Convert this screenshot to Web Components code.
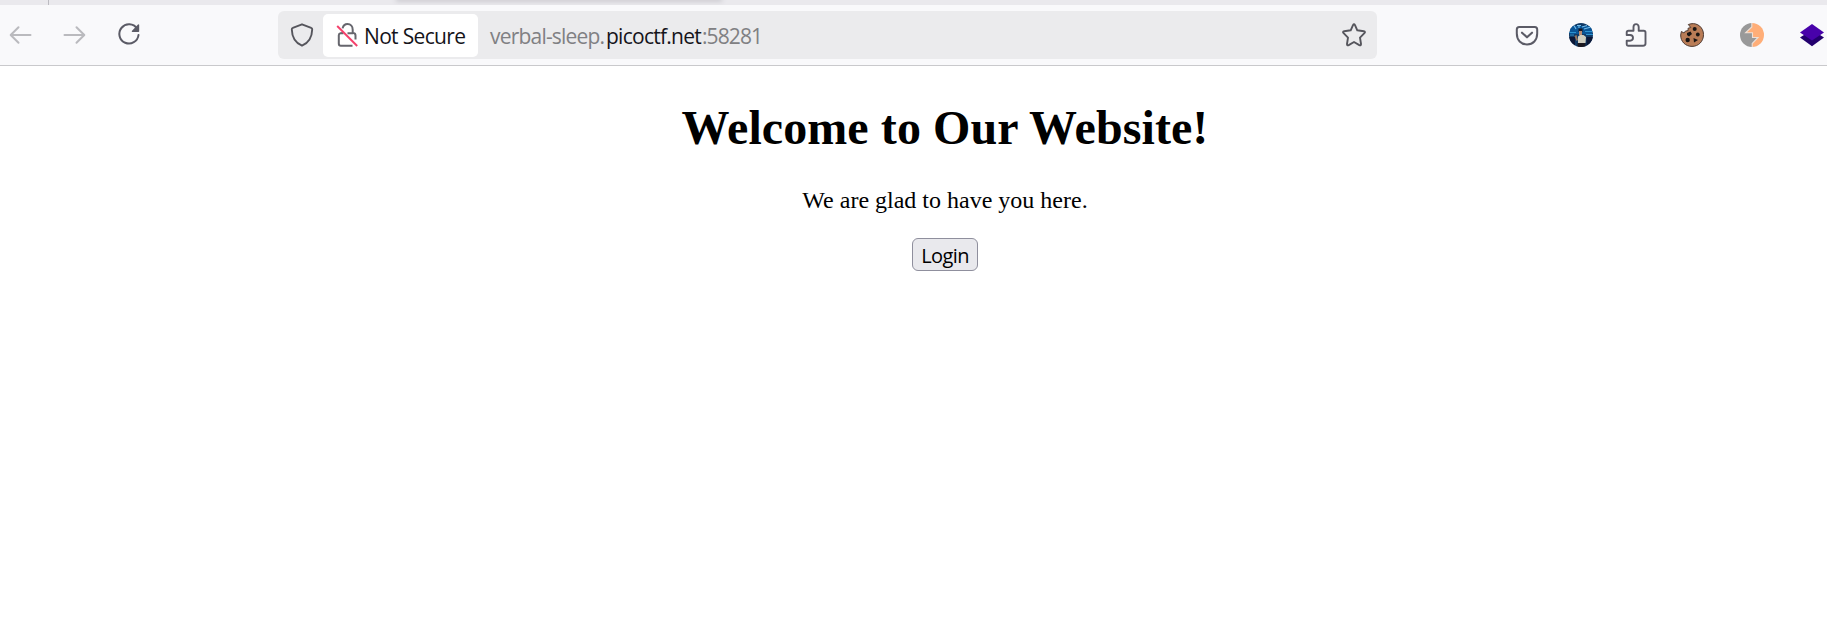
<!DOCTYPE html>
<html lang="en">
<head>
<meta charset="utf-8">
<title>Welcome</title>
<style>
html,body{margin:0;height:100%;background:#fff;overflow:hidden}
</style>
</head>
<body>
<browser-window></browser-window>
<script>
const define = (name, html) => customElements.define(name, class extends HTMLElement {
  constructor() {
    super();
    const t = document.createElement('template');
    t.innerHTML = html;
    this.attachShadow({mode: 'open'}).append(t.content.cloneNode(true));
  }
});

const ICONS = {
  back: '<path d="M31 12H11.5M19 4.2L11.2 12L19 19.8" transform="translate(-9.5 0)" fill="none" stroke="#bababe" stroke-width="2" stroke-linecap="round" stroke-linejoin="round"/>',
  forward: '<path d="M1.5 12H21M13.5 4.2L21.3 12L13.5 19.8" fill="none" stroke="#bababe" stroke-width="2" stroke-linecap="round" stroke-linejoin="round"/>',
  reload: '<path d="M20 5.7A9.6 9.6 0 1 0 21.5 12" fill="none" stroke="#5b5b66" stroke-width="2" stroke-linecap="round"/><path d="M22.2 1.8V8.2Q22.2 9 21.4 9H15.2Q14.3 8.6 15 7.8L21 1.6Q21.8 1 22.2 1.8Z" fill="#5b5b66"/>',
  shield: '<path d="M12 1.3L21.2 4.9Q22.3 5.3 22.2 6.5C22 14.4 18.3 20 12 22.7C5.700 20 2 14.400 1.800 6.500Q1.700 5.300 2.800 4.900Z" fill="none" stroke="#55555c" stroke-width="1.900" stroke-linejoin="round"/>',
  lock: '<path d="M7.600 5.400C8.200 2.800 9.900 1.100 12.500 1.100C15.700 1.100 17.700 3.700 17.700 6.700V10H18.500Q20.500 10.300 20.500 12.500V16.500M12.500 10.300H18M17.500 22.700H5.800Q3.800 22.700 3.800 20.500V12.200Q3.800 10.500 5.500 10.200H7.500V9" fill="none" stroke="#66666d" stroke-width="2"/><path d="M2.200 3L22.200 23" stroke="#f5406b" stroke-width="1.900"/>',
  star: '<path d="M11 2.100Q12 .3 13 2.100L15.300 7.300L21.800 8.300Q23.800 8.700 22.400 10.200L18 14.700L19 21Q19.100 23 17.300 22.100L12 19L6.700 22.100Q4.900 23 5 21L6 14.700L1.600 10.200Q.2 8.700 2.200 8.300L8.700 7.300Z" fill="none" stroke="#55555c" stroke-width="1.900" stroke-linejoin="round"/>',
  pocket: '<path d="M4.200 4H19.800Q22.200 4 22.200 6.500V10.500C22.200 17.200 18 21.400 12 21.400S1.800 17.200 1.800 10.500V6.500Q1.800 4 4.200 4Z" fill="none" stroke="#5b5b66" stroke-width="2"/><path d="M7 9.700L12 14.300L17 9.700" fill="none" stroke="#5b5b66" stroke-width="2.100" stroke-linecap="round" stroke-linejoin="round"/>',
  avatar: '<defs><clipPath id="c"><circle cx="12" cy="12" r="12"/></clipPath></defs><g clip-path="url(#c)"><path fill="#103a66" d="M0 0H24V24H0Z"/><path fill="#0a5596" d="M1 3H23V11H1Z"/><path d="M5 2.500L7 6M8 2.500H12M10 2.500V5M13 4L18 2.500M15 6L22 4" stroke="#73bdec" stroke-width="1.100"/><path d="M0 9.500H7M1 12H5M16 8.500H24M17 11.500H24" stroke="#2d93d0" stroke-width="1"/><path fill="#0b1736" d="M0 14H6V24H0ZM17.500 14H24V24H17.500Z"/><path fill="#cfcdbf" d="M9 13.500L11 12H14.500L17 14L16.500 20H9Z"/><path fill="#1c1820" d="M9.500 5.500H13.500V9H9.500ZM8.500 20H16.500V24H8.500Z"/><path fill="#b98b73" d="M10 8H13V12H10Z"/><path fill="#93745f" d="M5.500 13L7.500 12L9 17L7.500 18Z"/></g>',
  puzzle: '<path d="M4 22.700H19Q21.500 22.700 21.500 20.500V9.500Q21.500 7.800 19.800 7.800H14.700V4C14.700 .2 9.500 .2 9.500 4V7.800H4.500Q2.700 7.800 2.700 9.500V12H6C10 12 10 17.700 6 17.700H2.700V21.200Q2.700 22.700 4 22.700Z" fill="none" stroke="#5b5b66" stroke-width="1.900" stroke-linejoin="round"/>',
  cookie: '<path d="M11 .8C17.500 -.4 23.500 4.600 23.500 11.500C23.500 18.500 18.500 23.400 12 23.400C5.500 23.400 .5 18.500 .7 12L1.400 8.500L4 10L5.300 8.200L8.200 7.500L8 5.300L10.800 4.500L8.300 1.500Z" fill="#b97c56" stroke="#4f3b32" stroke-width="1"/><g fill="#191513"><circle cx="14.700" cy="6" r="2"/><path d="M7 10L10.500 8.500L12 11L9 13.500L7 12Z"/><circle cx="17.800" cy="11.500" r="1.900"/><circle cx="7.700" cy="17" r="2.200"/><path d="M13.500 15L18 17L14 19.500Z"/></g>',
  burp: '<path d="M12 0A12 12 0 0 0 12 24Z" fill="#999"/><path d="M12 0A12 12 0 0 1 12 24Z" fill="#ffae78"/><path d="M12 4V10H5.500Z" fill="#ffae78"/><path d="M12 14.300H18.500L12 21Z" fill="#999"/><path d="M11.800 0V4L5.600 9.800H12.500V14.500H18L12.200 20.500V24" fill="none" stroke="#eee0d6" stroke-width="1.100"/>',
  layers: '<path d="M0 14.500L12 7L24 14.500L12 23.200Z" fill="#23006e"/><path d="M0 9.500L12 1L24 9.500L12 17.500Z" fill="#4802aa"/>'
};

customElements.define('ui-icon', class extends HTMLElement {
  constructor() {
    super();
    this.attachShadow({mode: 'open'}).innerHTML =
      '<style>:host{display:block;width:24px;height:24px;flex:none}svg{display:block;overflow:visible}</style>' +
      '<svg width="24" height="24" viewBox="0 0 24 24" aria-hidden="true">' + ICONS[this.getAttribute('name')] + '</svg>';
  }
});

define('tab-strip', `
<style>
:host{display:flex;height:5px;background:#eae9ed;overflow:hidden}
.rule{width:1px;margin-left:48px;background:#bcbbc1}
.tab{width:324px;height:1px;margin:-1px 0 0 348px;box-shadow:0 0 5px 1px #bbbac0}
</style><div class="rule"></div><div class="tab"></div>`);

define('address-bar', `
<style>
:host{display:flex;align-items:center;box-sizing:border-box;width:1099px;height:48px;padding:0 11px 0 12px;background:#ebebed;border-radius:6px;font:21px/28px "Open Sans","Noto Sans",sans-serif;color:#15141a}
.identity{display:flex;align-items:center;box-sizing:border-box;width:155px;height:43px;margin-left:9px;padding-left:12px;background:#fff;border-radius:5px}
.label{margin-left:5px;padding-top:2px;letter-spacing:-.67px;white-space:pre}
.url{display:flex;flex:1;margin-left:12px;padding-top:2px;color:#808083;white-space:pre}
.sub{width:116px;letter-spacing:-.8px}
.host{width:96px;color:#15141a;letter-spacing:-.74px}
.port{letter-spacing:-.9px}
</style>
<ui-icon name="shield"></ui-icon>
<div class="identity"><ui-icon name="lock"></ui-icon><span class="label">Not Secure</span></div>
<div class="url"><span class="sub">verbal-sleep.</span><span class="host">picoctf.net</span><span class="port">:58281</span></div>
<ui-icon name="star"></ui-icon>`);

define('nav-toolbar', `
<style>
:host{display:flex;align-items:center;box-sizing:border-box;height:61px;padding-left:9px;background:#f9f9fb;border-bottom:1px solid #c9c9cc}
.nav{display:flex;gap:30px;width:269px;flex:none}
.extensions{display:grid;grid-template-columns:54px 55px 56px 60px 60px 24px;margin-left:138px}
</style>
<div class="nav"><ui-icon name="back"></ui-icon><ui-icon name="forward"></ui-icon><ui-icon name="reload"></ui-icon></div>
<address-bar></address-bar>
<div class="extensions"><ui-icon name="pocket"></ui-icon><ui-icon name="avatar"></ui-icon><ui-icon name="puzzle"></ui-icon><ui-icon name="cookie"></ui-icon><ui-icon name="burp"></ui-icon><ui-icon name="layers"></ui-icon></div>`);

define('login-button', `
<style>
:host{display:block}
button{display:block;box-sizing:border-box;width:66px;height:33px;padding:2px 0 0;border:1px solid #8f8f9d;border-radius:6px;background:#e9e9ed;color:#000;font:20px/26px "Open Sans","Noto Sans",sans-serif;letter-spacing:-.6px}
</style><button><slot></slot></button>`);

define('welcome-page', `
<style>
:host{display:flex;flex-direction:column;align-items:center;width:1890px;font-family:"Liberation Serif",serif;color:#000}
h1{margin:34px 0 0;font-size:48px;line-height:55px;letter-spacing:.09px;white-space:nowrap}
p{margin:32px 0 24px;font-size:24px;line-height:27px}
</style>
<h1>Welcome to Our Website!</h1>
<p>We are glad to have you here.</p>
<login-button>Login</login-button>`);

define('browser-window', `
<style>:host{display:block;width:100%;height:100%;overflow:hidden}</style>
<tab-strip></tab-strip><nav-toolbar></nav-toolbar><welcome-page></welcome-page>`);
</script>
</body>
</html>
